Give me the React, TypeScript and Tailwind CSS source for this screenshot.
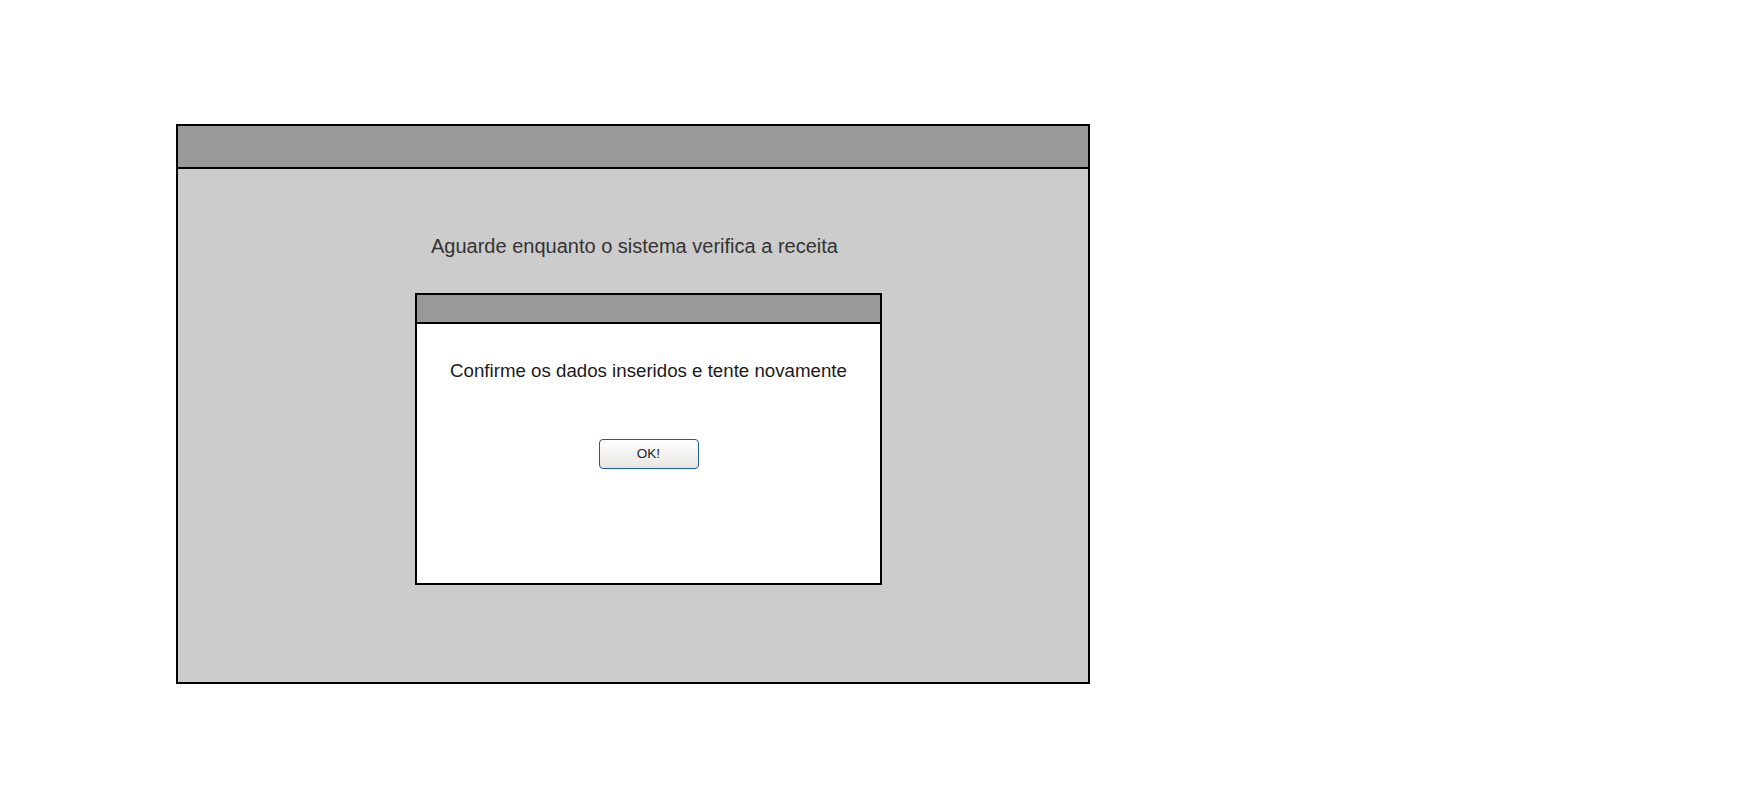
import React from "react";

export default function App() {
  return (
    <div className="w-[1759px] h-[790px] bg-white pl-[176px] pt-[124px]" style={{ fontFamily: '"Liberation Sans", Arial, sans-serif' }}>
      <div className="w-[914px] h-[560px] border-2 border-black bg-[#cccccc] flex flex-col">
        <div className="h-[43px] bg-[#999999] border-b-2 border-black shrink-0" />
        <div className="flex flex-col pt-[66px]">
          <div className="ml-[253px] text-[20px] leading-[23px] text-[#333333] whitespace-nowrap">
            Aguarde enquanto o sistema verifica a receita
          </div>
          <div className="ml-[237px] mt-[35px] w-[467px] h-[292px] border-2 border-black bg-white flex flex-col">
            <div className="h-[29px] bg-[#999999] border-b-2 border-black shrink-0" />
            <div className="flex flex-col items-center pt-[36px]">
              <div className="text-[18.7px] leading-[22px] text-[#1a1a1a] whitespace-nowrap">
                Confirme os dados inseridos e tente novamente
              </div>
              <button className="mt-[57px] w-[100px] h-[30px] rounded-[4px] border border-[#1c5a9a] bg-gradient-to-b from-white to-[#e8e6e0] text-[13.5px] text-[#222222]">
                OK!
              </button>
            </div>
          </div>
        </div>
      </div>
    </div>
  );
}
